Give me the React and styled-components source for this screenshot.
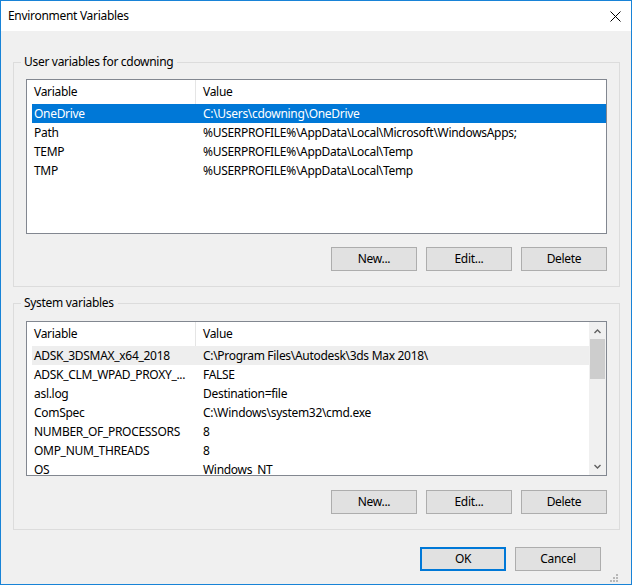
import React from 'react';
import styled, { createGlobalStyle } from 'styled-components';

const GlobalStyle = createGlobalStyle`
  html, body {
    margin: 0;
    padding: 0;
    background: #ffffff;
  }
  body {
    font-family: "Segoe UI", "Noto Sans", "Liberation Sans", sans-serif;
    font-size: 12px;
    letter-spacing: -0.3px;
    color: #000000;
  }
`;

const Window = styled.div`
  width: 632px;
  height: 585px;
  box-sizing: border-box;
  border: 1px solid #1883d7;
  background: #f0f0f0;
  display: flex;
  flex-direction: column;
`;

const TitleBar = styled.div`
  height: 30px;
  background: #ffffff;
  display: flex;
  align-items: center;
  justify-content: space-between;
  padding-left: 7px;
  flex-shrink: 0;
`;

const Title = styled.div`
  font-size: 12px;
  line-height: 16px;
`;

const CloseBox = styled.div`
  width: 32px;
  height: 30px;
  display: flex;
  align-items: center;
  justify-content: center;
`;

const Body = styled.div`
  flex: 1;
  display: flex;
  flex-direction: column;
  padding: 31px 11px 0 12px;
  gap: 16px;
`;

const Group = styled.div`
  border: 1px solid #dcdcdc;
  padding: 0 12px 15px 12px;
  display: flex;
  flex-direction: column;
`;

const GroupLabel = styled.div`
  align-self: flex-start;
  margin: -9px 0 0 -5px;
  padding: 0 4px 0 3px;
  line-height: 16px;
  background: #f0f0f0;
`;

const List = styled.div`
  margin-top: ${(p) => p.$top}px;
  height: 155px;
  box-sizing: border-box;
  border: 1px solid #828790;
  background: #ffffff;
  display: flex;
  overflow: hidden;
`;

const ListInner = styled.div`
  flex: 1;
  padding-left: 5px;
  display: flex;
  flex-direction: column;
  overflow: hidden;
`;

const Header = styled.div`
  height: 24px;
  display: flex;
  flex-shrink: 0;
`;

const HeaderCell = styled.div`
  flex: ${(p) => (p.$first ? '0 0 164px' : '1')};
  padding-left: ${(p) => (p.$first ? '2px' : '7px')};
  display: flex;
  align-items: center;
  border-right: ${(p) => (p.$first ? '1px solid #e5e5e5' : 'none')};
  box-sizing: border-box;
  line-height: 16px;
`;

const Row = styled.div`
  height: 19px;
  display: flex;
  flex-shrink: 0;
  align-items: center;
  background: ${(p) =>
    p.$sel === 'focus' ? '#0078d7' : p.$sel === 'dim' ? '#eeeeee' : 'transparent'};
  color: ${(p) => (p.$sel === 'focus' ? '#ffffff' : '#000000')};
  line-height: 16px;
  white-space: nowrap;
`;

const Cell = styled.div`
  flex: ${(p) => (p.$first ? '0 0 164px' : '1')};
  padding-left: ${(p) => (p.$first ? '2px' : '7px')};
  box-sizing: border-box;
  overflow: hidden;
`;

const ScrollBar = styled.div`
  width: 17px;
  flex-shrink: 0;
  background: #f0f0f0;
  display: flex;
  flex-direction: column;
  align-items: center;
`;

const ScrollArrow = styled.div`
  height: 17px;
  width: 17px;
  display: flex;
  align-items: center;
  justify-content: center;
  flex-shrink: 0;
`;

const ScrollTrack = styled.div`
  flex: 1;
  width: 100%;
  display: flex;
  flex-direction: column;
  align-items: center;
`;

const Thumb = styled.div`
  width: 15px;
  height: 40px;
  background: #cdcdcd;
`;

const ButtonRow = styled.div`
  display: flex;
  justify-content: flex-end;
  gap: 9px;
  margin-top: ${(p) => p.$top}px;
`;

const Button = styled.button`
  width: 86px;
  height: 24px;
  box-sizing: border-box;
  background: #e1e1e1;
  border: ${(p) => (p.$default ? '2px solid #0078d7' : '1px solid #adadad')};
  font-family: inherit;
  font-size: 12px;
  letter-spacing: inherit;
  color: #000000;
  padding: 0;
  line-height: 16px;
`;

const Footer = styled.div`
  display: flex;
  justify-content: flex-end;
  gap: 9px;
  padding: 1px 19px 0 0;
  position: relative;
  flex: 1;
`;

const Grip = styled.svg`
  position: absolute;
  right: 2px;
  bottom: 2px;
`;

const userVars = [
  ['OneDrive', 'C:\\Users\\cdowning\\OneDrive'],
  ['Path', '%USERPROFILE%\\AppData\\Local\\Microsoft\\WindowsApps;'],
  ['TEMP', '%USERPROFILE%\\AppData\\Local\\Temp'],
  ['TMP', '%USERPROFILE%\\AppData\\Local\\Temp'],
];

const systemVars = [
  ['ADSK_3DSMAX_x64_2018', 'C:\\Program Files\\Autodesk\\3ds Max 2018\\'],
  ['ADSK_CLM_WPAD_PROXY_...', 'FALSE'],
  ['asl.log', 'Destination=file'],
  ['ComSpec', 'C:\\Windows\\system32\\cmd.exe'],
  ['NUMBER_OF_PROCESSORS', '8'],
  ['OMP_NUM_THREADS', '8'],
  ['OS', 'Windows_NT'],
];

const Chevron = ({ up }) => (
  <svg width="9" height="6" viewBox="0 0 9 6">
    <path
      d={up ? 'M1.5 5 L4.5 2 L7.5 5' : 'M1.5 1 L4.5 4 L7.5 1'}
      fill="none"
      stroke="#606060"
      strokeWidth="1.4"
    />
  </svg>
);

const VarList = ({ rows, selected, top, scroll }) => (
  <List $top={top}>
    <ListInner>
      <Header>
        <HeaderCell $first>Variable</HeaderCell>
        <HeaderCell>Value</HeaderCell>
      </Header>
      {rows.map(([name, value], i) => (
        <Row key={name} $sel={i === 0 ? selected : null}>
          <Cell $first>{name}</Cell>
          <Cell>{value}</Cell>
        </Row>
      ))}
    </ListInner>
    {scroll && (
      <ScrollBar>
        <ScrollArrow>
          <Chevron up />
        </ScrollArrow>
        <ScrollTrack>
          <Thumb />
        </ScrollTrack>
        <ScrollArrow>
          <Chevron />
        </ScrollArrow>
      </ScrollBar>
    )}
  </List>
);

const ActionButtons = ({ top }) => (
  <ButtonRow $top={top}>
    <Button>New...</Button>
    <Button>Edit...</Button>
    <Button>Delete</Button>
  </ButtonRow>
);

const App = () => {
  return (
    <>
      <GlobalStyle />
      <Window>
        <TitleBar>
          <Title>Environment Variables</Title>
          <CloseBox>
            <svg width="11" height="11" viewBox="0 0 11 11">
              <path d="M0.5 0.5 L10.5 10.5 M10.5 0.5 L0.5 10.5" stroke="#000" strokeWidth="1" />
            </svg>
          </CloseBox>
        </TitleBar>
        <Body>
          <Group>
            <GroupLabel>User variables for cdowning</GroupLabel>
            <VarList rows={userVars} selected="focus" top={9} />
            <ActionButtons top={13} />
          </Group>
          <Group>
            <GroupLabel>System variables</GroupLabel>
            <VarList rows={systemVars} selected="dim" top={10} scroll />
            <ActionButtons top={14} />
          </Group>
          <Footer>
            <Button $default>OK</Button>
            <Button>Cancel</Button>
            <Grip width="8" height="8" viewBox="0 0 8 8">
              <rect x="6" y="0" width="2" height="2" fill="#b8b8b8" />
              <rect x="3" y="3" width="2" height="2" fill="#b8b8b8" />
              <rect x="6" y="3" width="2" height="2" fill="#b8b8b8" />
              <rect x="0" y="6" width="2" height="2" fill="#b8b8b8" />
              <rect x="3" y="6" width="2" height="2" fill="#b8b8b8" />
              <rect x="6" y="6" width="2" height="2" fill="#b8b8b8" />
            </Grip>
          </Footer>
        </Body>
      </Window>
    </>
  );
};

export default App;
